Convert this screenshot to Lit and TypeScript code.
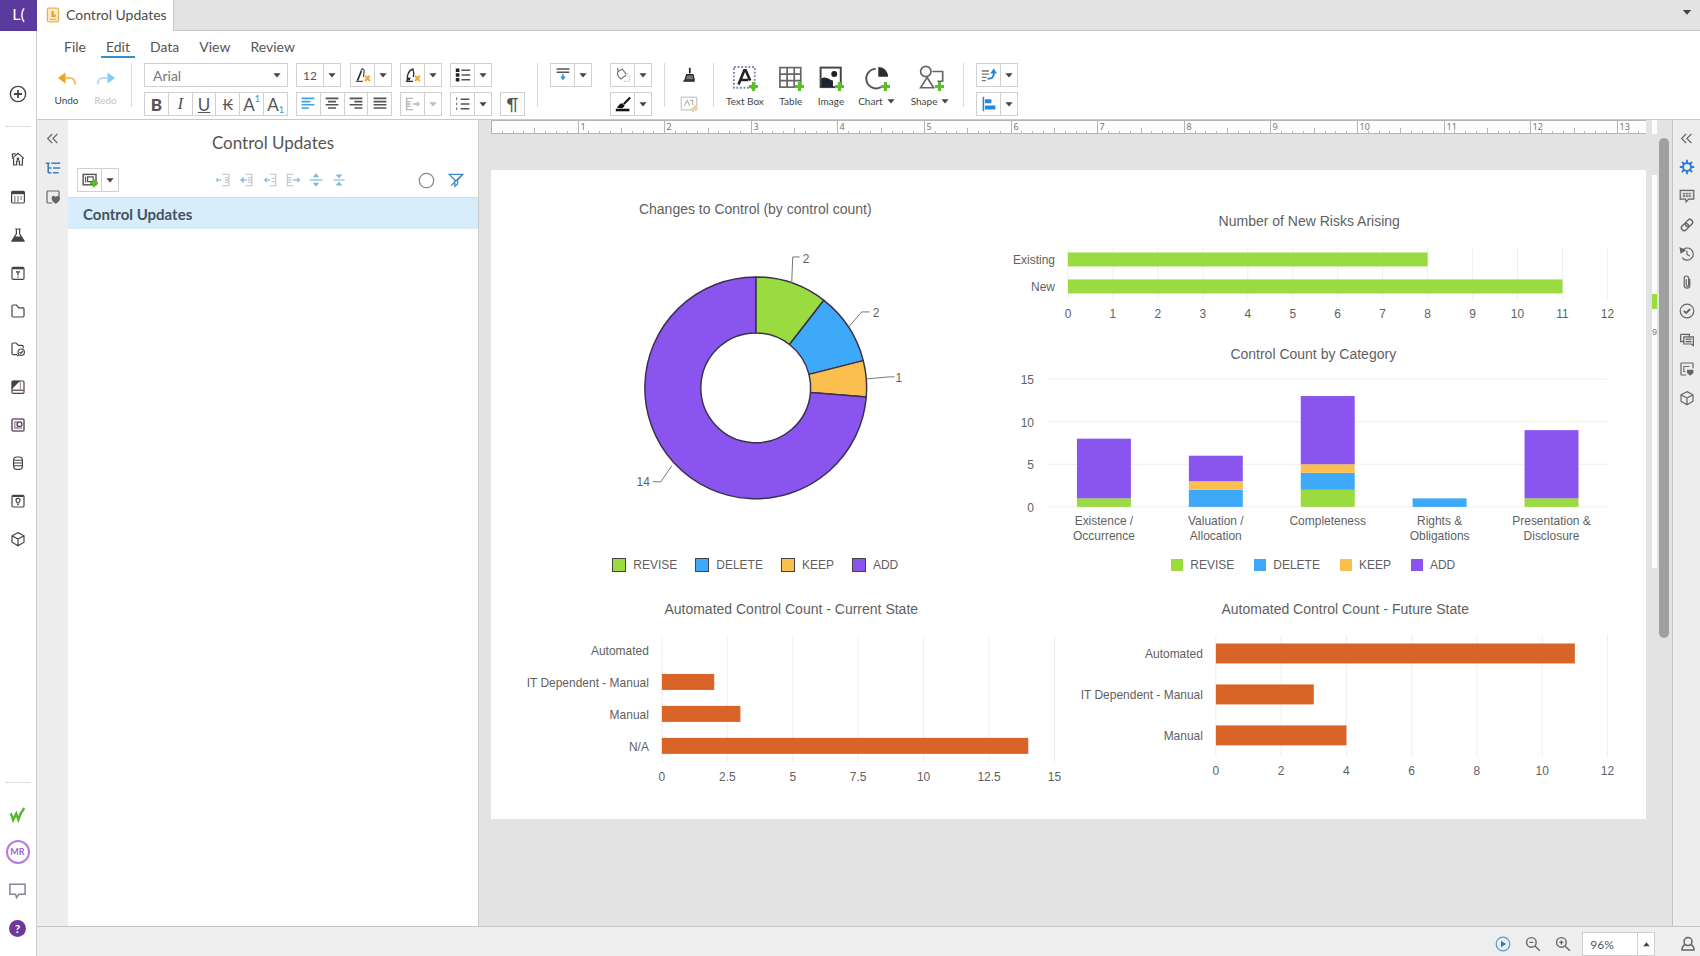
import { LitElement, html, svg, css } from "lit";
import { customElement, property } from "lit/decorators.js";

const GREEN = "#9adb3f";
const BLUE = "#3fa9f9";
const AMBER = "#fbbf50";
const PURPLE = "#8a55ef";
const ORANGE = "#d86427";

const plus = svg`<path d="M16.5 13v7M13 16.5h7" stroke="#5cbf2a" stroke-width="2.4"/>`;

/* Glyphs drawn on a 20 x 20 grid, stroked with the current colour. */
const ICONS: Record<string, unknown> = {
  caret: svg`<path d="M4 7h12l-6 7z" fill="currentColor" stroke="none"/>`,
  caretUp: svg`<path d="M4 13h12l-6-7z" fill="currentColor" stroke="none"/>`,
  collapse: svg`<path d="M9.5 4l-6 6 6 6M16.5 4l-6 6 6 6"/>`,
  doc: svg`<rect x="3" y="1.500" width="14" height="17" rx="2" fill="#fdebc8" stroke="#efb04a" stroke-width="1.600"/><path d="M8 5v7.500h5.500v-3H11V5z" fill="#f0a02a" stroke="none"/><path d="M6 15.500h8" stroke="#efb04a"/>`,
  undo: svg`<path d="M1 8l7.500-5.500v11z" fill="#f4a11d" stroke="none"/><path d="M8 8h5c3.500 0 5.200 2.500 5.200 6.500" stroke="#f8c268" stroke-width="2"/>`,
  redo: svg`<path d="M19 8l-7.500-5.500v11z" fill="#85cbf3" stroke="none"/><path d="M12 8H7c-3.500 0-5.200 2.500-5.200 6.500" stroke="#b5def6" stroke-width="2"/>`,
  add: svg`<circle cx="10" cy="10" r="8.500"/><path d="M10 5.500v9M5.500 10h9" stroke-width="2"/>`,
  home: svg`<path d="M2.500 9.500L10 3l7.500 6.500M4.500 9v8.500h3.800v-5h3.400v5h3.800V9M3 3.500h4M3 3.500v4"/><circle cx="10" cy="10" r="1"/>`,
  calendar: svg`<rect x="2" y="3" width="16" height="14.500" rx="1.500"/><path d="M2 5h16" stroke-width="3"/><path d="M5 10h2M9 10h2M13 10h2M5 12.500h2M9 12.500h2M13 12.500h2M5 15h2M9 15h2" stroke-width="1.400"/>`,
  flask: svg`<path d="M6.500 2.500h7M8 2.500v6L2.500 17.500h15L12 8.500v-6"/><path d="M6 12.500h8l3 5H3z" fill="currentColor"/>`,
  alertBox: svg`<rect x="2.500" y="3" width="15" height="15" rx="1.500"/><path d="M3 4h14" stroke-width="2.800"/><path d="M7.500 8.500h5M10 8.500v4.500M10 14.500v1.500" stroke-width="1.600"/>`,
  folder: svg`<path d="M2.500 16V4c0-.8.600-1.500 1.500-1.500h4l3 3.500h5c.9 0 1.500.6 1.500 1.500V16c0 .8-.6 1.500-1.500 1.500H4c-.9 0-1.500-.7-1.500-1.500z"/>`,
  folderCheck: svg`<path d="M9 17H4c-.9 0-1.500-.7-1.500-1.500V4c0-.8.600-1.500 1.500-1.500h3.500l3 3H15c.9 0 1.500.6 1.500 1.500v2"/><circle cx="14" cy="14" r="4" /><path d="M12 14l1.500 1.500 2.500-3M11 17l-2 2"/>`,
  slides: svg`<rect x="2.500" y="2.500" width="15" height="15.500" rx="1.500"/><path d="M3 3h8l-8 8z" fill="currentColor"/><path d="M3 14h14" /><path d="M13 3v11" stroke="#b58aa5"/>`,
  search: svg`<rect x="2.500" y="2.500" width="15" height="15" rx="1.500" stroke="#6e5d70" stroke-width="2"/><path d="M6 6h3v8H6zM9 14h6" stroke="#9a7c9b"/><circle cx="12" cy="9" r="3"/>`,
  database: svg`<rect x="4.500" y="2.500" width="11" height="15.500" rx="4"/><path d="M5 6.500h10M5 10h10M5 13.500h10" stroke-width="1.300"/>`,
  bulb: svg`<rect x="2.500" y="3" width="15" height="14.500" rx="1.500"/><path d="M3 4h14" stroke-width="2"/><path d="M7.500 9c0-3 5-3 5 0 0 1.500-1.500 2-1.500 3.500H9C9 11 7.500 10.500 7.500 9zM9 14.500h2"/>`,
  cube: svg`<path d="M10 2l7.500 4v8L10 18.500 2.500 14V6zM2.500 6L10 10l7.500-4M10 10v8.500"/>`,
  w: svg`<path d="M2 8.500c1.200 2.500 2 5 2.800 8L8.500 9l2.500 7c1.500-5 3.500-9.500 7-13.500" stroke="#57b62c" stroke-width="2.800"/>`,
  chat: svg`<path d="M2 3.500h16v10.500h-6.500L9 17.500 8 14H2z" stroke="#8d7f9e" stroke-width="1.600"/>`,
  gear: svg`<circle cx="10" cy="10" r="5" stroke="#2a7bd6" stroke-width="2.400"/><path d="M10 1v3.500M10 15.500V19M1 10h3.500M15.500 10H19M3.700 3.700L6 6M14 14l2.300 2.300M16.300 3.700L14 6M6 14l-2.300 2.300" stroke="#2a7bd6" stroke-width="2.400"/>`,
  comment: svg`<path d="M1.500 3h17v11H12l-3 3.500L8 14H1.500z" fill="#dcdcdc"/><path d="M5 7h10M5 10h10" stroke-width="1.800" stroke-dasharray="2.500 1"/>`,
  link: svg`<g transform="rotate(-45 10 10)"><rect x="1.500" y="6.500" width="10" height="7" rx="3.500" stroke-width="1.700"/><rect x="8.500" y="6.500" width="10" height="7" rx="3.500" stroke-width="1.700"/></g>`,
  history: svg`<path d="M3.500 6.500A7.600 7.600 0 1 1 4 14.500M10 6v4.500l3.500 2"/><path d="M1.500 2.500l1 6 5-3z" fill="currentColor"/>`,
  clip: svg`<path d="M13.500 6v8c0 5-7 5-7 0V5.500c0-4 5.500-4 5.500 0V13.500c0 2.500-3 2.500-3 0V6.500"/>`,
  check: svg`<circle cx="10" cy="10" r="8.500"/><path d="M6 10l3 2.500L14 7.500" stroke-width="2.400"/>`,
  cards: svg`<path d="M2 3h11v2.500M2 3v9h4M6 6h12v11l-3-2H6z" fill="#ddd"/><path d="M8.500 9h7M8.500 12h7"/>`,
  pageHeart: svg`<path d="M9 17.500H3.500c-.6 0-1-.4-1-1v-13c0-.6.4-1 1-1h13c.6 0 1 .4 1 1V9"/><path d="M6 7h7M6 7v6h2" stroke-width="1.300"/><path d="M10 11h8v4l-4 3.500-4-3.500z" fill="currentColor" stroke="none"/>`,
  heart: svg`<path d="M9 17.500H3.500c-.6 0-1-.4-1-1v-13c0-.6.4-1 1-1h13c.6 0 1 .4 1 1V9"/><path d="M13.500 18.500c-7-4-6-10-2.800-10 1.400 0 2.500 1 2.800 2 .3-1 1.400-2 2.800-2 3.200 0 4.200 6-2.800 10z" fill="currentColor" stroke="none"/>`,
  outline: svg`<path d="M1 4h5M8 4h11M4 4v12M4 10h4M10 10h9M4 16h4M10 16h7" stroke="#3e7bc8" stroke-width="2"/>`,
  addSlide: svg`<rect x="1.500" y="3" width="16" height="13" stroke-width="1.800"/><path d="M4.500 6v7M7 6h7v6H7z"/><path d="M15 9v10M10 14h10" stroke="#5cbf2a" stroke-width="2.800"/>`,
  ind1: svg`<path d="M8 3h8v14H8M11 7h5M11 10h5M11 13h5" stroke="#c9cdd0" stroke-width="1.800"/><path d="M1.500 10h5M1.500 7.500v5" stroke="#8dc3e4" stroke-width="1.800"/>`,
  ind2: svg`<path d="M8 3h8v14H8M11 7h5M11 10h5M11 13h5" stroke="#c9cdd0" stroke-width="1.800"/><path d="M1 10l5-4v8z" fill="#8dc3e4" stroke="none"/><path d="M5 10h5" stroke="#8dc3e4" stroke-width="1.800"/>`,
  ind3: svg`<path d="M10 3h7v14h-7M12 8h5M12 12h5" stroke="#c9cdd0" stroke-width="1.800"/><path d="M3 10h7M3 10l3-2.500M3 10l3 2.500" stroke="#8dc3e4" stroke-width="1.800"/>`,
  ind4: svg`<path d="M11 3H3v14h8M3 7h5M3 10h5M3 13h5" stroke="#c9cdd0" stroke-width="1.800"/><path d="M10 10h8M15.500 7.500L18 10l-2.500 2.500" stroke="#8dc3e4" stroke-width="1.800"/>`,
  ind5: svg`<path d="M2 10h16" stroke="#8dc3e4" stroke-width="1.800"/><path d="M10 1.500l4 5H6zM10 18.500l4-5H6z" fill="#7db8dd" stroke="none"/>`,
  ind6: svg`<path d="M3 10h14" stroke="#b0c8d6" stroke-width="1.800"/><path d="M10 8l4-5H6zM10 12l4 5H6z" fill="#7db8dd" stroke="none"/>`,
  ring: svg`<circle cx="10" cy="10" r="8.500" stroke="#8a8a8a"/>`,
  filter: svg`<path d="M1.500 3h17l-6.500 7v5l-3.500 3v-8zM4 17L17 4" stroke="#3b8ac4" stroke-width="1.600"/>`,
  fontColor: svg`<path d="M3 17l5-12" stroke="#333" stroke-width="2.200"/><path d="M7 4.500L9.500 2l2 2.500-1 8M1 18h9" stroke="#555" stroke-width="1.600"/><path d="M12.500 11l6 6.500M18.500 11l-6 6.500" stroke="#f3a93c" stroke-width="2.600"/>`,
  highlight: svg`<path d="M3 17c-1-5 1-13 7-14.500 1 3 1 7 .5 10M1 18h9" stroke="#333" stroke-width="1.700"/><path d="M3 13h4l-1 4H2z" fill="#333" stroke="none"/><path d="M12.500 11l6 6.500M18.500 11l-6 6.500" stroke="#f3a93c" stroke-width="2.600"/>`,
  bullets: svg`<path d="M8 4h11M8 10h11M8 16h11" stroke-width="2"/><path d="M1 4h4.500M1 10h4.500M1 16h4.500" stroke-width="4.400" stroke="#222"/>`,
  numbers: svg`<path d="M7 4h11M7 10h11M7 16h11" stroke-width="2"/><path d="M2 2v3M2 8.500v3M2 14.500v3" stroke="#777"/>`,
  left: svg`<path d="M2 3h16M2 7h11M2 11h16M2 15h9" stroke="#3fa3e6" stroke-width="2"/>`,
  center: svg`<path d="M2 3h16M5 7h10M2 11h16M5 15h10" stroke-width="2"/>`,
  right: svg`<path d="M2 3h16M8 7h10M2 11h16M8 15h10" stroke-width="2"/>`,
  justify: svg`<path d="M2 3h16M2 7h16M2 11h16M2 15h16" stroke-width="2"/>`,
  indent: svg`<path d="M10 3H2v14h8M2 7h5M2 10h5M2 13h5M10 10h8M15 7.500l2.500 2.500-2.500 2.500" stroke="#b4b9bd" stroke-width="1.800"/>`,
  spacing: svg`<path d="M2 2.500h16M2 6.500h16" stroke="#555" stroke-width="1.800"/><path d="M6.500 12h7L10 16.500z" fill="#2f93dc" stroke="none"/><path d="M10 9v5" stroke="#2f93dc" stroke-width="2"/>`,
  bucket: svg`<path d="M3.500 1v4M3.500 6L9 2.500l5 6.500M3.500 6c-1 3 0 6 4 9l6.500-5" stroke="#777"/><path d="M15 8l3.500 5v5H9" stroke="#bbb" stroke-dasharray="2 2"/>`,
  pen: svg`<path d="M19 2l-8 8" stroke="#111" stroke-width="2.600"/><path d="M2 14c3-1 3-5 7-5l3 3c-1 4-6 4-10 2z" fill="#111" stroke="none"/><path d="M1 17.500h17" stroke="#111" stroke-width="3.200"/>`,
  brush: svg`<path d="M11 1v7" stroke="#222" stroke-width="2.200"/><path d="M7 9.500h8l1.500 6.500H5z" fill="#777" stroke="#222"/><path d="M3 17.500h14" stroke="#222" stroke-width="2"/>`,
  picEdit: svg`<rect x="1.500" y="2.500" width="17" height="14" stroke="#ccc"/><path d="M5 12l3-6 3 6M11 6h3v5" stroke="#bbb"/><path d="M13 18l5-6" stroke="#f6cf9c" stroke-width="4"/>`,
  textBox: svg`<rect x="1.500" y="1.500" width="16" height="16" stroke="#7b86a8" stroke-dasharray="1.400 1.400"/><path d="M5 15L9.500 4h1L14 12M6.500 11.500h6" stroke="#222" stroke-width="2"/>${plus}`,
  table: svg`<g stroke="#666" stroke-width="1.300"><rect x="1.500" y="2" width="16" height="15"/><path d="M1.500 7h16M1.500 12h16M7 2v15M12.500 2v15"/></g>${plus}`,
  image: svg`<rect x="2" y="2" width="15.500" height="15" stroke="#444"/><path d="M2.500 10.500c4-2.500 6 1 9 1.500V17h-9z" fill="#1d2430" stroke="none"/><circle cx="12.500" cy="7" r="2.300" fill="#222" stroke="none"/>${plus}`,
  chart: svg`<path d="M9 3a7.500 7.500 0 1 0 4 14" stroke="#555"/><path d="M11 1.500V9h7.500c0-4-3-7.500-7.500-7.500z" fill="#2b2f33" stroke="none"/>${plus}`,
  shape: svg`<g stroke="#666" stroke-width="1.300"><circle cx="6" cy="5" r="4"/><path d="M11 5h8v7.500h-4M7 9.500L2 17.500h10z"/></g>${plus}`,
  order: svg`<path d="M1 5h9M1 9h9M1 13h6M1 17h5" stroke="#777" stroke-width="1.600"/><path d="M8 14.500c6 .5 8-1.500 8-7" stroke="#2487dd" stroke-width="2.400"/><path d="M11.500 8L16 2l4 6z" fill="#2487dd" stroke="none"/>`,
  alignObj: svg`<path d="M3 1v18" stroke="#2487dd" stroke-width="2"/><path d="M5 4h8v5H5zM5 12h13v5H5z" fill="#2487dd" stroke="none"/>`,
  play: svg`<circle cx="10" cy="10" r="8.500" stroke="#4a9fd8"/><path d="M7.500 6l6.500 4-6.500 4z" fill="#2f7fb8" stroke="none"/>`,
  zoomOut: svg`<circle cx="8" cy="8" r="6" stroke-width="1.800"/><path d="M12.500 12.500l6 6M5.500 8h5" stroke-width="1.800"/>`,
  zoomIn: svg`<circle cx="8" cy="8" r="6" stroke-width="1.800"/><path d="M12.500 12.500l6 6M5.500 8h5M8 5.500v5" stroke-width="1.800"/>`,
  person: svg`<circle cx="10" cy="7" r="5" stroke-width="1.900"/><path d="M6.500 11c-3 1-4 3-4 6.500h15c0-3.500-1-5.500-4-6.500" stroke-width="1.900"/>`,
};

const icon = (name: string, size = 16) => html`<svg class="icon" width=${size} height=${size} viewBox="0 0 20 20"
  fill="none" stroke="currentColor" stroke-width="1.5" aria-hidden="true">${ICONS[name]}</svg>`;

const split = (name: string, label: string, muted = false) => html`<div class="box ${muted ? "muted" : ""}">
  <button class="cell" aria-label=${label}>${icon(name)}</button>
  <button class="drop" aria-label="${label} options">${icon("caret", 12)}</button>
</div>`;

/* ---------- Charts ---------- */

const chartStyles = css`
  :host { display: block; font-family: "Liberation Sans", Arial, sans-serif; color: #5f5f5f; }
  figure { margin: 0; }
  h2 { margin: 0; font-size: 14px; line-height: 20px; font-weight: 400; text-align: center; }
  .plot { display: block; width: 100%; height: auto; overflow: visible; }
  .plot text { font-size: 12px; fill: #5f5f5f; }
  .end { text-anchor: end; }
  .mid { text-anchor: middle; }
  .grid { stroke: #efefef; stroke-width: 1; }
  .lead { stroke: #777; fill: none; }
  .slice { stroke: #3a3050; stroke-width: 1.5; stroke-linejoin: round; }
`;

interface Bar { label: string; value: number; }

@customElement("bar-chart")
class BarChart extends LitElement {
  @property() heading = "";
  @property({ attribute: false }) bars: Bar[] = [];
  @property({ attribute: false }) ticks: number[] = [];
  @property() color = GREEN;
  @property({ type: Number }) width = 500;
  @property({ type: Number }) height = 100;
  @property({ type: Number }) origin = 0;
  @property({ type: Number }) extent = 400;
  @property({ type: Number }) top = 16;
  @property({ type: Number }) band = 30;
  @property({ type: Number }) thick = 16;
  @property({ type: Number }) axis = 100;

  static styles = chartStyles;

  render() {
    const max = this.ticks[this.ticks.length - 1];
    const x = (v: number) => this.origin + (v / max) * this.extent;
    const bottom = this.axis - 14;
    return html`<figure>
      <h2>${this.heading}</h2>
      <svg class="plot" viewBox="0 0 ${this.width} ${this.height}" role="img" aria-label=${this.heading}>
        ${this.ticks.map((t) => svg`<line class="grid" x1=${x(t)} x2=${x(t)} y1=${this.top + 2} y2=${bottom}/>
          <text class="mid" x=${x(t)} y=${this.axis + 4}>${t}</text>`)}
        ${this.bars.map((b, i) => {
          const mid = this.top + this.band * (i + 0.5);
          return svg`<rect x=${x(0)} y=${mid - this.thick / 2} width=${x(b.value) - x(0)} height=${this.thick} fill=${this.color}/>
            <text class="end" x=${this.origin - 13} y=${mid + 5}>${b.label}</text>`;
        })}
      </svg>
    </figure>`;
  }
}

@customElement("stack-chart")
class StackChart extends LitElement {
  static styles = chartStyles;

  private data: { lines: string[]; values: number[] }[] = [
    { lines: ["Existence /", "Occurrence"], values: [1, 0, 0, 7] },
    { lines: ["Valuation /", "Allocation"], values: [0, 2, 1, 3] },
    { lines: ["Completeness"], values: [2, 2, 1, 8] },
    { lines: ["Rights &", "Obligations"], values: [0, 1, 0, 0] },
    { lines: ["Presentation &", "Disclosure"], values: [1, 0, 0, 8] },
  ];

  render() {
    const colors = [GREEN, BLUE, AMBER, PURPLE];
    const y = (v: number) => 143 - (v / 15) * 128;
    return html`<figure>
      <h2>Control Count by Category</h2>
      <svg class="plot" viewBox="0 0 588 191" role="img" aria-label="Control Count by Category">
        ${[0, 5, 10, 15].map((t) => svg`<line class="grid" x1="28" x2="588" y1=${y(t)} y2=${y(t)}/>
          <text class="end" x="14" y=${y(t) + 5}>${t}</text>`)}
        ${this.data.map((d, i) => {
          const cx = 84 + i * 112;
          let sum = 0;
          return svg`${d.values.map((v, k) => {
            sum += v;
            return v ? svg`<rect x=${cx - 27} y=${y(sum)} width="54" height=${y(0) - y(v)} fill=${colors[k]}/>` : null;
          })}
          ${d.lines.map((l, k) => svg`<text class="mid" x=${cx} y=${161 + k * 15}>${l}</text>`)}`;
        })}
      </svg>
    </figure>`;
  }
}

@customElement("donut-chart")
class DonutChart extends LitElement {
  static styles = chartStyles;

  render() {
    const values = [2, 2, 1, 14];
    const colors = [GREEN, BLUE, AMBER, PURPLE];
    const total = values.reduce((a, b) => a + b, 0);
    const cx = 265, cy = 169, R = 111, r = 55;
    const pt = (rad: number, f: number) => {
      const a = f * 2 * Math.PI;
      return `${cx + rad * Math.sin(a)} ${cy - rad * Math.cos(a)}`;
    };
    let at = 0;
    return html`<figure>
      <h2>Changes to Control (by control count)</h2>
      <svg class="plot" viewBox="0 0 529 336" role="img" aria-label="Changes to Control">
        ${values.map((v, i) => {
          const a = at / total;
          at += v;
          const b = at / total;
          const big = b - a > 0.5 ? 1 : 0;
          return svg`<path class="slice" fill=${colors[i]}
            d="M${pt(R, a)}A${R} ${R} 0 ${big} 1 ${pt(R, b)}L${pt(r, b)}A${r} ${r} 0 ${big} 0 ${pt(r, a)}Z"/>`;
        })}
        <path class="lead" d="M301 64l1-26h7M358 108l13-15h8M376 160l23-2h5M181 247l-11 16h-8"/>
        <text x="312" y="44">2</text>
        <text x="382" y="98">2</text>
        <text x="405" y="163">1</text>
        <text class="end" x="159" y="267">14</text>
      </svg>
    </figure>`;
  }
}

@customElement("chart-legend")
class ChartLegend extends LitElement {
  @property({ type: Boolean }) outlined = false;

  static styles = css`
    :host { display: block; font: 12px/20px "Liberation Sans", Arial, sans-serif; color: #5f5f5f; }
    .list { display: flex; justify-content: center; gap: 20px; margin: 0; padding: 0; list-style: none; }
    .outlined { gap: 18px; }
    .item { display: flex; align-items: center; gap: 7px; }
    .key { width: 12px; height: 12px; }
    .outlined .key { border: 1px solid #444; }
    .revise { background: #9adb3f; }
    .delete { background: #3fa9f9; }
    .keep { background: #fbbf50; }
    .add { background: #8a55ef; }
  `;

  render() {
    return html`<ul class="list ${this.outlined ? "outlined" : ""}">
      ${["REVISE", "DELETE", "KEEP", "ADD"].map(
        (n) => html`<li class="item"><span class="key ${n.toLowerCase()}"></span>${n}</li>`)}
    </ul>`;
  }
}

@customElement("page-ruler")
class PageRuler extends LitElement {
  static styles = css`
    :host { display: block; }
    .ruler { display: block; width: 100%; height: 14px; background: #fdfdfd; overflow: hidden; }
    .edge { stroke: #b5b5b5; }
    .label { font: 9px "Noto Sans", sans-serif; fill: #777; }
  `;

  render() {
    const step = 86.6 / 8;
    const marks = Array.from({ length: 107 }, (_, i) => i);
    return html`<svg class="ruler" aria-hidden="true">
      ${marks.map((i) => {
        const x = Math.round(i * step) + 0.5;
        const h = i % 8 === 0 ? 14 : i % 4 === 0 ? 6 : 3;
        return svg`<line class="edge" x1=${x} x2=${x} y1=${14 - h} y2="14"/>
          ${i % 8 === 0 && i > 0 ? svg`<text class="label" x=${x + 2} y="10">${i / 8}</text>` : null}`;
      })}
      <line class="edge" x1="0" x2="100%" y1="13.500" y2="13.500"/>
      <line class="edge" x1="0" x2="100%" y1="0.500" y2="0.500"/>
    </svg>`;
  }
}

/* ---------- Application shell ---------- */

@customElement("app-root")
class AppRoot extends LitElement {
  static styles = css`
    :host { display: flex; height: 100vh; font-family: Lato, sans-serif; color: #444; background: #fff; overflow: hidden; }
    * { box-sizing: border-box; }
    button { font: inherit; color: inherit; border: 0; background: none; padding: 0; margin: 0;
      display: flex; align-items: center; justify-content: center; }
    .icon { display: block; flex: none; }

    .rail { width: 37px; flex: none; display: flex; flex-direction: column; align-items: center;
      border-right: 1px solid #cfcfcf; color: #444; padding-right: 1px; }
    .brand { width: 37px; height: 31px; margin-right: -2px; flex: none; background: #5b3a9e; color: #fff;
      font-size: 16px; line-height: 28px; text-align: center; }
    .rail button { width: 36px; height: 38px; flex: none; }
    .new { margin-top: 44px; }
    .rule { width: 26px; height: 1px; background: #ddd; flex: none; }
    .home { margin-top: 13px; }
    .top-rule { margin-top: 13px; }
    .bottom { margin-top: auto; padding-bottom: 9px; display: flex; flex-direction: column; align-items: center; }
    .bottom .rule { margin-bottom: 12px; }
    .avatar { width: 24px; height: 24px; border: 2px solid #b57be0; border-radius: 50%; color: #a55fd8;
      font-size: 9px; line-height: 20px; font-weight: 700; text-align: center; }
    .help { width: 17px; height: 17px; border-radius: 50%; background: #70389a; color: #fff;
      font-size: 12px; line-height: 17px; font-weight: 700; text-align: center; }

    .app { flex: 1; min-width: 0; display: flex; flex-direction: column; }
    .tabs { height: 31px; flex: none; display: flex; background: #e3e3e3; }
    .tab { display: flex; align-items: center; gap: 5px; padding: 0 6px 2px 8px; font-size: 14px; background: #fff;
      border-right: 1px solid #c6c6c6; color: #4c4c4c; }
    .tab-fill { flex: 1; display: flex; justify-content: flex-end; align-items: center; padding: 0 6px 6px 0;
      border-bottom: 1px solid #c6c6c6; }
    .menu { display: flex; gap: 10px; padding: 6px 22px 0; }
    .menu a { font-size: 14px; line-height: 19px; padding: 0 5px; color: #555; text-decoration: none;
      border-bottom: 2px solid transparent; }
    .menu a.on { border-color: #3390c8; }

    .toolbar { display: flex; align-items: flex-start; padding: 5px 12px 4px 10px; height: 62px; border-bottom: 1px solid #c9c9c9; }
    .big { display: flex; flex-direction: column; align-items: center; gap: 3px; font-size: 10px; line-height: 14px; padding-top: 2px; }
    .big .row { gap: 2px; }
    .undo { width: 39px; }
    .undo .icon { margin-top: 5px; }
    .faded { color: #c4c4c4; }
    .sep { width: 1px; height: 44px; margin: 0 12px; background: #d9d9d9; flex: none; }
    .undo + .sep { margin-left: 6px; }
    .col { display: flex; flex-direction: column; gap: 5px; flex: none; }
    .row { display: flex; align-items: center; }
    .spread { justify-content: space-between; }
    .groups { display: flex; gap: 8px; align-items: flex-end; }
    .wide { gap: 18px; align-items: flex-start; }
    .box { display: flex; height: 24px; border: 1px solid #d0d0d0; background: #fff; color: #555; position: relative; }
    .box > * + * { border-left: 1px solid #d0d0d0; }
    .cell { width: 23px; }
    .drop { width: 17px; color: #444; }
    .muted, .muted .drop { color: #bbb; }
    .face { width: 144px; }
    .box select { appearance: none; width: 100%; border: 0; background: none; font: 14px Lato, sans-serif; color: #777;
      padding: 0 8px; margin: 0; }
    .box .arrow { position: absolute; right: 4px; top: 5px; border: 0; pointer-events: none; color: #444; }
    .box input { width: 26px; border: 0; padding: 0; margin: 0; background: none; text-align: center;
      font: 12px Lato, sans-serif; color: #555; }
    .letters .cell, .aligns .cell { flex: 1; }
    .letters { font-size: 17px; }
    .aligns { width: 96px; }
    .b { font-weight: 900; }
    .i { font-family: "Liberation Serif", serif; font-style: italic; }
    .u { text-decoration: underline; }
    .s { text-decoration: line-through; font-size: 15px; }
    .letters small { font-size: 9px; color: #2f93dc; }
    .up small { align-self: flex-start; }
    .down small { align-self: flex-end; }
    .pil { width: 25px; font-size: 17px; }
    .pil .cell { width: 23px; }
    .tool { width: 24px; height: 24px; }
    .insert { gap: 14px; }

    .main { flex: 1; min-height: 0; display: flex; }
    .strip { flex: none; background: #ededed; padding-top: 4px; color: #666; }
    .strip button { width: 100%; height: 29px; }
    .left { width: 31px; }
    .side { width: 28px; border-left: 1px solid #c4c4c4; }
    .side-list { display: flex; flex-direction: column; height: 288px; }
    .side-list button { flex: 0 1 29px; min-height: 0; }
    .panel { width: 411px; flex: none; background: #fff; border-right: 1px solid #c9c9c9; }
    .panel h1 { margin: 0; padding-top: 11px; font-size: 17px; line-height: 24px; font-weight: 400; text-align: center; color: #555; }
    .tools { display: flex; align-items: center; height: 24px; margin: 13px 0 5px; padding: 0 14px 0 9px; }
    .arrows { display: flex; gap: 7px; margin-left: 97px; }
    .ends { display: flex; gap: 13px; margin-left: auto; }
    .node { width: 100%; height: 32px; justify-content: flex-start; padding: 0 15px; font-size: 15px; font-weight: 700;
      background: #d8edfb; border-top: 1px solid #cfdfe8; color: #43525e; }

    .work { flex: 1; min-width: 0; display: flex; background: #e3e3e3; padding: 0 3px 0 12px; }
    .canvas { flex: 1; min-width: 0; }
    .page { margin-top: 36px; background: #fff; padding-bottom: 29px; }
    .upper { display: grid; grid-template-columns: 529fr 588fr; padding: 29px 39px 0 0; }
    .lower { display: grid; grid-template-columns: 541fr 526fr; gap: 21px; padding: 24px 38px 0 30px; }
    .risks { padding: 12px 8px 0 0; }
    .peek { width: 5px; margin: 0 2px 0 6px; }
    .peek-rule { height: 14px; background: #fdfdfd; }
    .peek-page { margin-top: 41px; height: 393px; background: #fdfdfd; padding-top: 119px;
      font: 9px/14px "Liberation Sans", sans-serif; color: #777; }
    .peek-bar { height: 15px; margin-bottom: 16px; background: #9adb3f; }
    .scroll { width: 10px; height: 500px; margin-top: 18px; border-radius: 5px; background: #a0a0a0; }

    .status { height: 30px; flex: none; display: flex; align-items: center; justify-content: flex-end; gap: 11px;
      background: #eee; border-top: 1px solid #c6c6c6; padding: 5px 4px 0 0; color: #666; }
    .views { gap: 14px; }
    .zoom .level { width: 54px; padding-right: 16px; }
    .person { margin-left: 14px; }
  `;

  render() {
    const rail = ["calendar", "flask", "alertBox", "folder", "folderCheck", "slides", "search", "database", "bulb", "cube"];
    return html`
      <nav class="rail" aria-label="Workspace">
        <div class="brand">L(</div>
        <button class="new" aria-label="Create">${icon("add", 18)}</button>
        <div class="rule top-rule"></div>
        <button class="home" aria-label="Home">${icon("home")}</button>
        ${rail.map((n) => html`<button aria-label=${n}>${icon(n)}</button>`)}
        <div class="bottom">
          <div class="rule"></div>
          <button aria-label="Workiva">${icon("w", 17)}</button>
          <button aria-label="Account"><span class="avatar">MR</span></button>
          <button aria-label="Messages">${icon("chat", 19)}</button>
          <button aria-label="Help"><span class="help">?</span></button>
        </div>
      </nav>
      <div class="app">
        <div class="tabs">
          <button class="tab">${icon("doc")}Control Updates</button>
          <div class="tab-fill"><button aria-label="All tabs">${icon("caret", 14)}</button></div>
        </div>
        <nav class="menu" aria-label="Menu">
          ${["File", "Edit", "Data", "View", "Review"].map((m) => html`<a href="#" class=${m === "Edit" ? "on" : ""}>${m}</a>`)}
        </nav>
        ${this.toolbar()}
        <div class="main">
          <div class="strip left">
            <button aria-label="Collapse panel">${icon("collapse", 15)}</button>
            <button aria-label="Outline">${icon("outline")}</button>
            <button aria-label="Favorites">${icon("heart")}</button>
          </div>
          <aside class="panel">
            <h1>Control Updates</h1>
            <div class="tools">
              ${split("addSlide", "Add slide")}
              <div class="arrows">
                ${[1, 2, 3, 4, 5, 6].map((n) => html`<button aria-label="Arrange ${n}">${icon("ind" + n)}</button>`)}
              </div>
              <div class="ends">
                <button aria-label="Status">${icon("ring", 17)}</button>
                <button aria-label="Filter">${icon("filter")}</button>
              </div>
            </div>
            <button class="node">Control Updates</button>
          </aside>
          <main class="work">
            <div class="canvas">
              <page-ruler></page-ruler>
              ${this.page()}
            </div>
            <div class="peek">
              <div class="peek-rule"></div>
              <div class="peek-page"><div class="peek-bar"></div>9</div>
            </div>
            <div class="scroll"></div>
          </main>
          <div class="strip side">
            <div class="side-list">
              ${["collapse", "gear", "comment", "link", "history", "clip", "check", "cards", "pageHeart", "cube"].map(
                (n) => html`<button aria-label=${n}>${icon(n, n === "collapse" ? 15 : 16)}</button>`)}
            </div>
          </div>
        </div>
        <footer class="status">
          <div class="row views">
            <button aria-label="Present">${icon("play")}</button>
            <button aria-label="Zoom out">${icon("zoomOut")}</button>
            <button aria-label="Zoom in">${icon("zoomIn")}</button>
          </div>
          <div class="box zoom">
            <input class="level" aria-label="Zoom level" value="96%" />
            <button class="drop" aria-label="Zoom presets">${icon("caretUp", 11)}</button>
          </div>
          <button class="person" aria-label="Users">${icon("person")}</button>
        </footer>
      </div>`;
  }

  private toolbar() {
    return html`<div class="toolbar" role="toolbar">
      <button class="big undo">${icon("undo", 20)}Undo</button>
      <button class="big undo faded">${icon("redo", 20)}Redo</button>
      <div class="sep"></div>
      <div class="groups">
        <div class="col">
          <div class="box face">
            <select aria-label="Font"><option>Arial</option></select>
            <span class="arrow">${icon("caret", 12)}</span>
          </div>
          <div class="box letters">
            <button class="cell b" aria-label="Bold">B</button>
            <button class="cell i" aria-label="Italic">I</button>
            <button class="cell u" aria-label="Underline">U</button>
            <button class="cell s" aria-label="Strikethrough">K</button>
            <button class="cell up" aria-label="Superscript">A<small>1</small></button>
            <button class="cell down" aria-label="Subscript">A<small>1</small></button>
          </div>
        </div>
        <div class="col">
          <div class="row spread">
            <div class="box">
              <input aria-label="Font size" value="12" />
              <button class="drop" aria-label="Font sizes">${icon("caret", 12)}</button>
            </div>
            ${split("fontColor", "Font color")}
          </div>
          <div class="box aligns">
            ${["left", "center", "right", "justify"].map((n) => html`<button class="cell" aria-label="Align ${n}">${icon(n)}</button>`)}
          </div>
        </div>
        <div class="col">${split("highlight", "Highlight")}${split("indent", "Indent", true)}</div>
        <div class="col">${split("bullets", "Bullets")}${split("numbers", "Numbering")}</div>
        <div class="box pil"><button class="cell" aria-label="Paragraph marks">¶</button></div>
      </div>
      <div class="sep"></div>
      <div class="groups wide">
        ${split("spacing", "Vertical alignment")}
        <div class="col">${split("bucket", "Fill")}${split("pen", "Border")}</div>
      </div>
      <div class="sep"></div>
      <div class="col">
        <button class="tool" aria-label="Format painter">${icon("brush")}</button>
        <button class="tool" aria-label="Edit picture">${icon("picEdit", 18)}</button>
      </div>
      <div class="sep"></div>
      <div class="row insert">
        <button class="big">${icon("textBox", 26)}Text Box</button>
        <button class="big">${icon("table", 26)}Table</button>
        <button class="big">${icon("image", 26)}Image</button>
        <button class="big">${icon("chart", 26)}<span class="row">Chart ${icon("caret", 12)}</span></button>
        <button class="big">${icon("shape", 26)}<span class="row">Shape ${icon("caret", 12)}</span></button>
      </div>
      <div class="sep"></div>
      <div class="col">${split("order", "Order")}${split("alignObj", "Align objects")}</div>
    </div>`;
  }

  private page() {
    return html`<section class="page">
      <div class="upper">
        <div>
          <donut-chart></donut-chart>
          <chart-legend outlined></chart-legend>
        </div>
        <div>
          <div class="risks">
            <bar-chart heading="Number of New Risks Arising" width="580" height="113" origin="48" extent="540"
              top="15" band="27" thick="14" axis="83" color=${GREEN}
              .ticks=${[0, 1, 2, 3, 4, 5, 6, 7, 8, 9, 10, 11, 12]}
              .bars=${[{ label: "Existing", value: 8 }, { label: "New", value: 11 }]}></bar-chart>
          </div>
          <stack-chart></stack-chart>
          <chart-legend></chart-legend>
        </div>
      </div>
      <div class="lower">
        <bar-chart heading="Automated Control Count - Current State" width="541" height="171" origin="141" extent="393"
          top="15" band="32" thick="16" axis="158" color=${ORANGE}
          .ticks=${[0, 2.5, 5, 7.5, 10, 12.5, 15]}
          .bars=${[{ label: "Automated", value: 0 }, { label: "IT Dependent - Manual", value: 2 },
            { label: "Manual", value: 3 }, { label: "N/A", value: 14 }]}></bar-chart>
        <bar-chart heading="Automated Control Count - Future State" width="526" height="171" origin="134" extent="392"
          top="14" band="41" thick="20" axis="152" color=${ORANGE}
          .ticks=${[0, 2, 4, 6, 8, 10, 12]}
          .bars=${[{ label: "Automated", value: 11 }, { label: "IT Dependent - Manual", value: 3 },
            { label: "Manual", value: 4 }]}></bar-chart>
      </div>
    </section>`;
  }
}
